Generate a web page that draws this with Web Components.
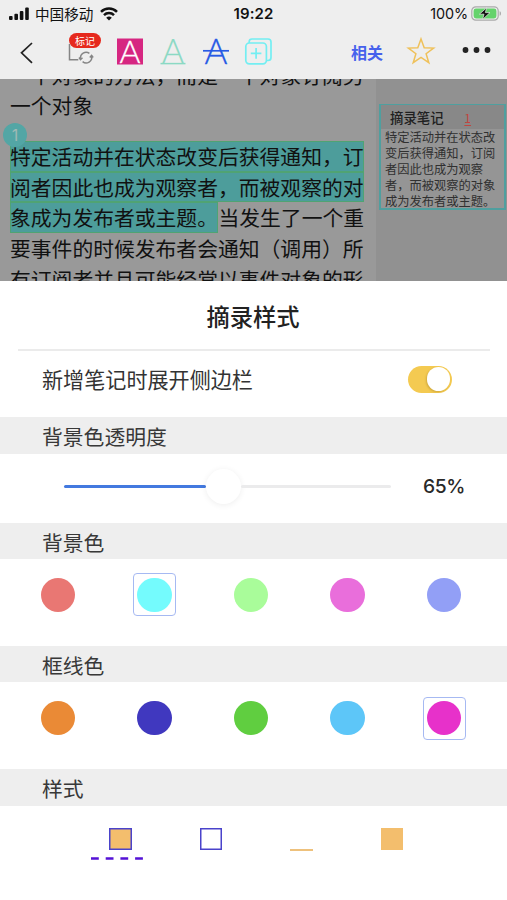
<!DOCTYPE html>
<html lang="zh-CN">
<head>
<meta charset="utf-8">
<meta name="viewport" content="width=device-width, initial-scale=1">
<title>摘录样式</title>
<style>
  html, body { margin: 0; height: 100%; }
  body {
    overflow: hidden;
    background: #fff;
    color: #333;
    font-family: "Liberation Sans", "Noto Sans CJK SC", sans-serif;
  }
</style>
</head>
<body>
<excerpt-app></excerpt-app>

<script>
class StatusBar extends HTMLElement {
  connectedCallback() {
    this.attachShadow({ mode: 'open' });
    this.shadowRoot.innerHTML = `
      <style>
        :host {
          display: grid;
          grid-template-columns: 1fr auto 1fr;
          align-items: center;
          box-sizing: border-box;
          height: 27px;
          padding: 0 5px 0 8px;
          background: #eee;
          color: #111;
          font: 15px/26px Inter, "Noto Sans CJK SC", sans-serif;
        }
        .side { display: flex; align-items: center; }
        .right { justify-content: flex-end; gap: 3px; font-size: 14.4px; letter-spacing: -0.1px; }
        .carrier { margin: 0 7px 0 5px; font: 14.6px/25px "Noto Sans CJK SC", sans-serif; }
        .time { font-weight: 600; font-size: 15px; letter-spacing: 0.1px; margin-left: -3px; }
        svg { display: block; }
      </style>
      <div class="side">
        <svg width="22" height="14" viewBox="0 0 22 14" fill="#111">
          <rect x="1" y="9" width="3.6" height="4" rx="1"/>
          <rect x="6.4" y="6.8" width="3.6" height="6.2" rx="1"/>
          <rect x="11.8" y="4" width="3.6" height="9" rx="1"/>
          <rect x="17.2" y="0.5" width="3.6" height="12.5" rx="1"/>
        </svg>
        <span class="carrier">中国移动</span>
        <svg width="18" height="14" viewBox="0 0 18 14" fill="none" stroke="#111" stroke-width="2.5">
          <path d="M1 4.9a11.3 11.3 0 0 1 16 0"/>
          <path d="M4 8.1a7.1 7.1 0 0 1 10 0"/>
          <path d="M9 13.6 6.2 10.8a4 4 0 0 1 5.6 0Z" fill="#111" stroke="none"/>
        </svg>
      </div>
      <span class="time">19:22</span>
      <div class="side right">
        <span>100%</span>
        <svg width="31" height="15" viewBox="0 0 31 15">
          <rect x="0.8" y="0.8" width="26.4" height="13.4" rx="4" fill="#eee" stroke="#aaa" stroke-width="1.2"/>
          <rect x="2.6" y="2.6" width="22.8" height="9.8" rx="2.4" fill="#65d36c"/>
          <path d="M28.6 5.2c1.9.5 1.9 4.1 0 4.6Z" fill="#aaa"/>
          <path d="M15.6 1.8 8.4 8.2h4.6l-1.4 5.2 7.4-6.8h-4.6Z" fill="#111" stroke="#eee" stroke-width="0.7"/>
        </svg>
      </div>
    `;
  }
}
customElements.define('status-bar', StatusBar);

class ToolBar extends HTMLElement {
  connectedCallback() {
    this.attachShadow({ mode: 'open' });
    this.shadowRoot.innerHTML = `
      <style>
        :host {
          display: flex;
          align-items: center;
          justify-content: space-between;
          box-sizing: border-box;
          height: 52px;
          padding: 0 16px 3px 18px;
          background: #eee;
        }
        .group { display: flex; align-items: center; }
        svg { display: block; overflow: visible; }
        text { font-family: Lato, sans-serif; font-weight: 300; text-anchor: middle; }
        .marker { position: relative; margin-left: 32px; }
        .badge {
          position: absolute;
          left: 1px;
          top: -6px;
          width: 32px;
          height: 15px;
          border-radius: 8px;
          background: #e6291d;
          color: #fff;
          font: 10px/15px "Noto Sans CJK SC", sans-serif;
          text-align: center;
        }
        .related {
          color: #4661ec;
          font: 700 16px/26px "Noto Sans CJK SC", sans-serif;
          margin: 1px 24px 0 0;
        }
        .star { margin: -1px 27px 0 0; }
      </style>
      <div class="group">
        <svg width="18" height="26" viewBox="0 0 18 26" fill="none" stroke="#222" stroke-width="1.7">
          <path d="M14 4 3.5 13.8 14 23.8"/>
        </svg>
        <div class="marker">
          <svg width="26" height="26" viewBox="0 0 26 26" fill="none" stroke="#858585" stroke-width="1.5">
            <path d="M1.5 5v15.8h8.8"/>
            <path d="M12.6 19.8a5.6 5.6 0 0 1 8.8-5.5M23.6 17a5.6 5.6 0 0 1-9 5.6"/>
            <path d="M11 18.5l1.5 2.1 2-1.8M21.8 18.6l1.8-2.1 1.6 2"/>
          </svg>
          <span class="badge">标记</span>
        </div>
        <svg style="margin-left:23px" width="26" height="26" viewBox="0 0 26 26">
          <rect y="-0.5" width="26" height="26" fill="#d62681"/>
          <text x="13" y="24" font-size="32" fill="#fff" stroke="#fff" stroke-width=".3">A</text>
        </svg>
        <svg style="margin-left:17px" width="26" height="26" viewBox="0 0 26 26">
          <text x="13" y="24.2" font-size="33.5" fill="#8bd9c4" stroke="#8bd9c4" stroke-width=".2">A</text>
          <path d="M0.5 24.6h25" stroke="#8bd9c4" stroke-width="1.5"/>
        </svg>
        <svg style="margin-left:17px" width="26" height="26" viewBox="0 0 26 26">
          <text x="13" y="25.2" font-size="35" fill="#285ae5" stroke="#285ae5" stroke-width=".3">A</text>
          <path d="M0 11.8h26" stroke="#285ae5" stroke-width="1.7"/>
        </svg>
        <svg style="margin-left:16px" width="27" height="27" viewBox="0 0 27 27" fill="none" stroke="#73eef2" stroke-width="1.7">
          <rect x="0.8" y="5" width="20.6" height="20.8" rx="3.5"/>
          <path d="M4.2 5V3.6Q4.2 1 7 1h16q3 0 3 3v15.5q0 3-3 3h-1.4"/>
          <path d="M5.8 15.4h10.6M11.1 10.1v10.6"/>
        </svg>
      </div>
      <div class="group">
        <span class="related">相关</span>
        <svg class="star" width="28" height="28" viewBox="0 0 28 28" fill="none" stroke="#efc15a" stroke-width="1.5">
          <path d="M14 2l3.2 8.8 9.4.3-7.5 5.6 2.7 9-7.8-5.2-7.8 5.2 2.7-9L1.4 11.1l9.4-.3Z"/>
        </svg>
        <svg style="margin-top:-3px" width="29" height="8" viewBox="0 0 29 8" fill="#222">
          <circle cx="3.5" cy="4" r="2.9"/><circle cx="14.5" cy="4" r="2.9"/><circle cx="25.5" cy="4" r="2.9"/>
        </svg>
      </div>
    `;
  }
}
customElements.define('tool-bar', ToolBar);

class SideNote extends HTMLElement {
  connectedCallback() {
    this.attachShadow({ mode: 'open' });
    this.shadowRoot.innerHTML = `
      <style>
        :host {
          display: block;
          box-sizing: border-box;
          width: 127px;
          height: 106px;
          border: 2px solid #4f9f9f;
          border-top-width: 1px;
          background: #959595;
          color: #303030;
          font: 12.25px/15.9px "Noto Sans CJK SC", sans-serif;
        }
        header {
          display: flex;
          justify-content: space-between;
          height: 24px;
          padding: 0 33px 0 9px;
          background: #888;
          color: #202020;
          font-size: 13.4px;
          line-height: 24px;
          font-weight: 500;
        }
        .num { color: #c0453f; font-weight: 400; text-decoration: underline; text-underline-offset: 2px; font-size: 12px; line-height: 25px; }
        .body { padding: 1.2px 0 0 4px; white-space: nowrap; }
      </style>
      <header><span>摘录笔记</span><span class="num">1</span></header>
      <div class="body"><slot></slot></div>
    `;
  }
}
customElements.define('side-note', SideNote);

class ReaderPage extends HTMLElement {
  connectedCallback() {
    this.attachShadow({ mode: 'open' });
    this.shadowRoot.innerHTML = `
      <style>
        :host {
          display: flex;
          height: 202px;
          overflow: hidden;
          background: #999;
          color: #111;
          font: 20.8px/30.7px "Noto Sans CJK SC", sans-serif;
        }
        .text { flex: 0 0 376px; box-sizing: border-box; padding-left: 10px; white-space: nowrap; }
        .scroll { margin-top: -19.5px; }
        .excerpt { position: relative; margin-top: 20px; }
        .line { display: block; height: 30.7px; }
        mark {
          display: inline-block;
          box-sizing: border-box;
          height: 30.7px;
          padding-right: 0.5px;
          background: #4d9d9b;
          color: inherit;
          box-shadow: inset 0 0 0 1px #50a373;
        }
        .badge {
          position: absolute;
          left: -7px;
          top: -18px;
          width: 24px;
          height: 24px;
          border-radius: 50%;
          background: #53a6a5;
          color: #9fb9b5;
          font: 16px/24px Inter, sans-serif;
          text-align: center;
        }
        aside {
          flex: 1;
          display: flex;
          flex-direction: column;
          padding: 25px 0 0 3px;
          background: #919191;
        }
      </style>
      <div class="text">
        <div class="scroll">
          <span class="line">一个对象的方法，而是一个对象订阅另</span>
          <span class="line">一个对象</span>
        </div>
        <div class="excerpt">
          <span class="line"><mark>特定活动并在状态改变后获得通知，订</mark></span>
          <span class="line"><mark>阅者因此也成为观察者，而被观察的对</mark></span>
          <span class="line"><mark>象成为发布者或主题。</mark>当发生了一个重</span>
          <span class="line">要事件的时候发布者会通知（调用）所</span>
          <span class="line">有订阅者并且可能经常以事件对象的形</span>
          <span class="badge">1</span>
        </div>
      </div>
      <aside>
        <side-note>特定活动并在状态改<br>变后获得通知，订阅<br>者因此也成为观察<br>者，而被观察的对象<br>成为发布者或主题。</side-note>
      </aside>
    `;
  }
}
customElements.define('reader-page', ReaderPage);

// Grey band with a title, followed by the slotted controls
class SheetSection extends HTMLElement {
  connectedCallback() {
    this.attachShadow({ mode: 'open' });
    this.shadowRoot.innerHTML = `
      <style>
        :host { display: flex; flex-direction: column; color: #383838; }
        h2 {
          box-sizing: border-box;
          height: 36.7px;
          margin: 0;
          padding: 0 0 0 42px;
          background: #eee;
          font: 400 20.8px/38px "Noto Sans CJK SC", sans-serif;
        }
        .content { flex: 1; display: flex; flex-direction: column; }
      </style>
      <h2>${this.getAttribute('heading')}</h2>
      <div class="content"><slot></slot></div>
    `;
  }
}
customElements.define('sheet-section', SheetSection);

class ToggleSwitch extends HTMLElement {
  connectedCallback() {
    this.attachShadow({ mode: 'open' });
    this.shadowRoot.innerHTML = `
      <style>
        :host {
          display: flex;
          justify-content: flex-end;
          align-items: center;
          box-sizing: border-box;
          width: 44px;
          height: 27px;
          padding: 2px;
          border-radius: 14px;
          background: #f4ca51;
        }
        span { width: 23.5px; height: 23.5px; border-radius: 50%; background: #fff; box-shadow: -1px 1px 2px rgba(110, 80, 0, .25); }
      </style>
      <span></span>
    `;
  }
}
customElements.define('toggle-switch', ToggleSwitch);

class OpacitySlider extends HTMLElement {
  connectedCallback() {
    this.attachShadow({ mode: 'open' });
    this.shadowRoot.innerHTML = `
      <style>
        :host { display: flex; align-items: center; height: 65px; padding: 0 42px 0 64px; }
        .track { display: flex; align-items: center; width: 327px; }
        .done { width: 142px; height: 3px; border-radius: 2px; background: #4379df; }
        .knob { width: 35px; height: 35px; border-radius: 50%; background: #fff; box-shadow: 0 1px 6px rgba(0, 0, 0, .07); }
        .rest { flex: 1; height: 3px; border-radius: 2px; background: #ebebec; }
        .value { flex: 1; text-align: right; color: #292929; font: 500 19.3px/24px Inter, sans-serif; letter-spacing: -0.4px; }
      </style>
      <div class="track"><span class="done"></span><span class="knob"></span><span class="rest"></span></div>
      <span class="value">${this.getAttribute('value')}%</span>
    `;
  }
}
customElements.define('opacity-slider', OpacitySlider);

class ColorSwatches extends HTMLElement {
  connectedCallback() {
    const selected = Number(this.getAttribute('selected'));
    const items = this.getAttribute('colors').split(' ').map((color, i) =>
      `<span class="cell${i === selected ? ' selected' : ''}"><i style="background:${color}"></i></span>`
    ).join('');
    this.attachShadow({ mode: 'open' });
    this.shadowRoot.innerHTML = `
      <style>
        :host { display: flex; justify-content: space-between; padding: 14.2px 41.5px 0 36.5px; }
        .cell {
          display: flex;
          align-items: center;
          justify-content: center;
          box-sizing: border-box;
          width: 43px;
          height: 43px;
          border: 1px solid transparent;
          border-radius: 4px;
        }
        .selected { border-color: #a6b9f2; }
        i { width: 34.5px; height: 34.5px; border-radius: 50%; }
      </style>
      ${items}
    `;
  }
}
customElements.define('color-swatches', ColorSwatches);

class StylePicker extends HTMLElement {
  connectedCallback() {
    this.attachShadow({ mode: 'open' });
    this.shadowRoot.innerHTML = `
      <style>
        :host { display: flex; gap: 68.2px; padding: 22px 0 0 109.4px; }
        span { position: relative; box-sizing: border-box; width: 22.3px; height: 22.3px; }
        .framed { box-shadow: inset 0 0 0 1.5px #4a43cb; }
        .filled { background: #f3be6d; }
        .line { align-self: flex-end; height: 2.5px; margin-bottom: -1px; background: #eec17c; }
        svg { position: absolute; left: -18px; top: 29px; }
      </style>
      <span class="framed filled">
        <svg width="52" height="3" viewBox="0 0 52 3"><path d="M0 1.5h52" stroke="#5412d6" stroke-width="2.6" stroke-dasharray="7.8 6.9"/></svg>
      </span>
      <span class="framed"></span>
      <span class="line"></span>
      <span class="filled"></span>
    `;
  }
}
customElements.define('style-picker', StylePicker);

class StyleSheetPanel extends HTMLElement {
  connectedCallback() {
    this.attachShadow({ mode: 'open' });
    this.shadowRoot.innerHTML = `
      <style>
        :host {
          display: flex;
          flex-direction: column;
          height: 619px;
          background: #fff;
          color: #333;
          font-family: "Noto Sans CJK SC", sans-serif;
        }
        h1 {
          box-sizing: border-box;
          height: 70px;
          margin: 0 17px 0 18px;
          padding-right: 2px;
          border-bottom: 2px solid #ebebeb;
          color: #222;
          font-size: 23.3px;
          font-weight: 500;
          line-height: 71px;
          text-align: center;
        }
        .row {
          display: flex;
          align-items: center;
          justify-content: space-between;
          box-sizing: border-box;
          height: 66px;
          padding: 0 55px 10px 42px;
          font-size: 21.1px;
        }
        .opacity { height: 105.5px; }
        .colors { height: 123.3px; }
      </style>
      <h1>摘录样式</h1>
      <div class="row"><span>新增笔记时展开侧边栏</span><toggle-switch></toggle-switch></div>
      <sheet-section class="opacity" heading="背景色透明度"><opacity-slider value="65"></opacity-slider></sheet-section>
      <sheet-section class="colors" heading="背景色">
        <color-swatches selected="1" colors="#e97773 #74fbfd #a9fc9a #e96edb #929ff6"></color-swatches>
      </sheet-section>
      <sheet-section class="colors" heading="框线色">
        <color-swatches selected="4" colors="#ea8a36 #4038bf #60ce40 #5dc6f8 #e731ca"></color-swatches>
      </sheet-section>
      <sheet-section heading="样式"><style-picker></style-picker></sheet-section>
    `;
  }
}
customElements.define('style-sheet-panel', StyleSheetPanel);

class ExcerptApp extends HTMLElement {
  connectedCallback() {
    this.attachShadow({ mode: 'open' });
    this.shadowRoot.innerHTML = `
      <style>
        :host { display: flex; flex-direction: column; width: 507px; height: 900px; overflow: hidden; }
      </style>
      <status-bar></status-bar>
      <tool-bar></tool-bar>
      <reader-page></reader-page>
      <style-sheet-panel></style-sheet-panel>
    `;
  }
}
customElements.define('excerpt-app', ExcerptApp);
</script>
</body>
</html>
